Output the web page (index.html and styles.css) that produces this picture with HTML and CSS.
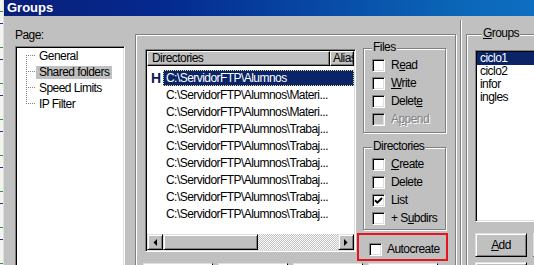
FILE: index.html
```html
<!DOCTYPE html>
<html lang="en">
<head>
  <meta charset="UTF-8" />
  <title>Groups</title>
  <link rel="stylesheet" href="styles.css">
</head>
<body>
  <div class="desk"></div>
  <div class="window">
    <div class="titlebar">Groups</div>
    <div class="content">

      <div class="page-col">
        <div class="page-label">Page:</div>
        <div class="tree sunken">
          <ul class="tree-items">
            <li><span>General</span></li>
            <li class="current"><span>Shared folders</span></li>
            <li><span>Speed Limits</span></li>
            <li><span>IP Filter</span></li>
          </ul>
        </div>
      </div>

      <div class="panel">
        <div class="panel-row">
          <div class="listview sunken">
            <div class="lv-header">
              <div class="lv-col lv-col-dir">Directories</div>
              <div class="lv-col">Alias</div>
            </div>
            <div class="lv-rows">
              <div class="lv-row selected"><span class="home">H</span><span class="path">C:\ServidorFTP\Alumnos</span></div>
              <div class="lv-row"><span class="home"></span><span class="path">C:\ServidorFTP\Alumnos\Materi...</span></div>
              <div class="lv-row"><span class="home"></span><span class="path">C:\ServidorFTP\Alumnos\Materi...</span></div>
              <div class="lv-row"><span class="home"></span><span class="path">C:\ServidorFTP\Alumnos\Trabaj...</span></div>
              <div class="lv-row"><span class="home"></span><span class="path">C:\ServidorFTP\Alumnos\Trabaj...</span></div>
              <div class="lv-row"><span class="home"></span><span class="path">C:\ServidorFTP\Alumnos\Trabaj...</span></div>
              <div class="lv-row"><span class="home"></span><span class="path">C:\ServidorFTP\Alumnos\Trabaj...</span></div>
              <div class="lv-row"><span class="home"></span><span class="path">C:\ServidorFTP\Alumnos\Trabaj...</span></div>
              <div class="lv-row"><span class="home"></span><span class="path">C:\ServidorFTP\Alumnos\Trabaj...</span></div>
            </div>
            <div class="hscroll">
              <div class="sb-btn"><svg width="4" height="7" viewBox="0 0 4 7"><path d="M4 0V7L0.5 3.5Z" fill="#000"/></svg></div>
              <div class="sb-thumb"></div>
              <div class="sb-track"></div>
              <div class="sb-btn"><svg width="4" height="7" viewBox="0 0 4 7"><path d="M0 0V7L3.5 3.5Z" fill="#000"/></svg></div>
            </div>
          </div>

          <div class="perm-col">
            <div class="groupbox files">
              <span class="gb-label">Files</span>
              <div class="checks">
                <div class="check"><span class="box"></span><span>R<u>e</u>ad</span></div>
                <div class="check"><span class="box"></span><span><u>W</u>rite</span></div>
                <div class="check"><span class="box"></span><span>Delet<u>e</u></span></div>
                <div class="check disabled"><span class="box"></span><span>A<u>p</u>pend</span></div>
              </div>
            </div>
            <div class="groupbox dirs">
              <span class="gb-label">Directories</span>
              <div class="checks">
                <div class="check"><span class="box"></span><span><u>C</u>reate</span></div>
                <div class="check"><span class="box"></span><span>Delete</span></div>
                <div class="check"><span class="box"><svg width="9" height="9" viewBox="0 0 9 9"><path d="M1 4.2L3.4 6.6L8 2" fill="none" stroke="#000" stroke-width="2"/></svg></span><span>List</span></div>
                <div class="check"><span class="box"></span><span>+ S<u>u</u>bdirs</span></div>
              </div>
            </div>
            <div class="marked">
              <div class="check"><span class="box"></span><span>Autocreate</span></div>
            </div>
          </div>
        </div>
        <div class="panel-buttons">
          <div class="button"></div>
          <div class="button"></div>
          <div class="button"></div>
          <div class="button"></div>
        </div>
      </div>

      <div class="side">
        <div class="groupbox groups">
          <span class="gb-label"><u>G</u>roups</span>
          <div class="listbox sunken">
            <div class="lb-item selected">ciclo1</div>
            <div class="lb-item">ciclo2</div>
            <div class="lb-item">infor</div>
            <div class="lb-item">ingles</div>
          </div>
          <div class="side-buttons">
            <div class="button add"><span><u>A</u>dd</span></div>
            <div class="button add"></div>
          </div>
          <div class="side-buttons lower">
            <div class="button add"></div>
          </div>
        </div>
      </div>

    </div>
  </div>
</body>
</html>
```

FILE: styles.css
```css
body {
  margin: 0;
  height: 265px;
  overflow: hidden;
  display: flex;
  background: #c0c0c0;
  font-family: "Liberation Sans", Arial, sans-serif;
  font-size: 12px;
  letter-spacing: -0.55px;
  color: #000;
}
u { text-decoration: underline; text-underline-offset: 1px; }

.desk {
  width: 3px;
  flex: none;
  background-color: #f2f2ee;
  background-image: repeating-linear-gradient(to bottom, transparent 0 11px, #2e9a2e 11px 12px, transparent 12px 23px, #2a2a9a 23px 24px, transparent 24px 36px);
}
.window {
  flex: 1;
  border-left: 1px solid #dfdfdf;
  min-width: 0;
}
.titlebar {
  height: 16px;
  line-height: 16px;
  padding-left: 3px;
  color: #fff;
  font-weight: bold;
  font-size: 13px;
  letter-spacing: 0;
  background: linear-gradient(to right, #0a1f78 0%, #04298f 30%, #0b66b8 86%, #0e6ec2 100%);
}
.content {
  display: flex;
  align-items: flex-start;
}

/* sunken 3d edge used by tree, list view and list box */
.sunken {
  box-sizing: border-box;
  background: #fff;
  border: 1px solid;
  border-color: #808080 #fff #fff #808080;
  box-shadow: inset 1px 1px 0 #000, inset -1px -1px 0 #dfdfdf;
  padding: 1px;
}

/* ---- page tree ---- */
.page-col {
  flex: none;
  width: 110px;
  margin-left: 11px;
}
.page-label {
  margin-top: 11px;
  line-height: 16px;
}
.tree {
  margin-top: 3px;
  height: 240px;
}
.tree-items {
  list-style: none;
  margin: 0 0 0 9px;
  padding: 0;
  background-image: repeating-linear-gradient(to bottom, #808080 0 1px, transparent 1px 2px);
  background-repeat: no-repeat;
  background-size: 1px calc(100% - 16px);
  background-position: 0 7px;
}
.tree-items li {
  height: 16px;
  display: flex;
  align-items: center;
  padding-left: 10px;
  white-space: nowrap;
  background-image: repeating-linear-gradient(to right, #808080 0 1px, transparent 1px 2px);
  background-repeat: no-repeat;
  background-size: 9px 1px;
  background-position: 0 7px;
}
.tree-items li span {
  padding: 0 3px;
  line-height: 13px;
}
.tree-items li.current span { background: #c0c0c0; }

/* ---- shared folders panel ---- */
.panel {
  flex: none;
  box-sizing: border-box;
  width: 321px;
  height: 260px;
  margin: 18px 0 0 10px;
  padding: 14px 0 0 9px;
  border: 1px solid #808080;
  box-shadow: inset 1px 1px 0 #fff, 1px 1px 0 #fff;
}
.panel-row {
  display: flex;
  align-items: flex-start;
}
.listview {
  width: 211px;
  height: 203px;
  display: flex;
  flex-direction: column;
  overflow: hidden;
}
.lv-header {
  display: flex;
  height: 15px;
  flex: none;
}
.lv-col {
  box-sizing: border-box;
  line-height: 13px;
  padding-left: 4px;
  background: #c0c0c0;
  border: 1px solid;
  border-color: #fff #000 #000 #fff;
  box-shadow: inset -1px -1px 0 #808080;
  white-space: nowrap;
  overflow: hidden;
}
.lv-col-dir { width: 183px; flex: none; }
.lv-col:last-child { flex: 1; padding-left: 2px; }
.lv-rows {
  flex: 1;
  padding-top: 3px;
}
.lv-row {
  height: 17px;
  display: flex;
  align-items: center;
  padding-left: 4px;
  white-space: nowrap;
}
.home {
  width: 12px;
  flex: none;
  font-weight: bold;
  font-size: 14px;
  letter-spacing: 0;
  color: #0a1a5a;
}
.path {
  flex: 1;
  line-height: 14px;
  padding: 0 2px;
  box-sizing: border-box;
  border: 1px solid transparent;
}
.lv-row.selected .path {
  background: #0a246a;
  color: #fff;
  border: 1px dotted #e8e070;
}
.hscroll {
  display: flex;
  height: 16px;
  flex: none;
}
.sb-btn, .sb-thumb, .button {
  box-sizing: border-box;
  background: #c0c0c0;
  border: 1px solid;
  border-color: #dfdfdf #000 #000 #dfdfdf;
  box-shadow: inset 1px 1px 0 #fff, inset -1px -1px 0 #808080;
}
.sb-btn {
  width: 16px;
  flex: none;
  display: flex;
  align-items: center;
  justify-content: center;
}
.sb-thumb { width: 95px; flex: none; }
.sb-track {
  flex: 1;
  background: repeating-conic-gradient(#c0c0c0 0% 25%, #fff 0% 50%) 0 0 / 2px 2px;
}

.perm-col {
  flex: none;
  width: 91px;
  margin-left: 1px;
}
.groupbox {
  box-sizing: border-box;
  border: 1px solid #808080;
  box-shadow: inset 1px 1px 0 #fff, 1px 1px 0 #fff;
  display: flex;
  flex-direction: column;
  padding-left: 8px;
}
.groupbox > * { flex: none; }
.gb-label {
  align-self: flex-start;
  margin: -9px 0 0 0;
  padding: 0 1px;
  line-height: 14px;
  background: #c0c0c0;
}
.perm-col .groupbox {
  width: 83px;
  margin-left: 6px;
}
.files { margin-top: -1px; height: 85px; }
.dirs { margin-top: 14px; height: 83px; }
.checks { margin-top: 2px; }
.check {
  height: 18px;
  display: flex;
  align-items: center;
  gap: 6px;
  white-space: nowrap;
}
.box {
  box-sizing: border-box;
  width: 13px;
  height: 13px;
  flex: none;
  background: #fff;
  border: 1px solid;
  border-color: #808080 #fff #fff #808080;
  box-shadow: inset 1px 1px 0 #000, inset -1px -1px 0 #dfdfdf;
  display: flex;
  align-items: center;
  justify-content: center;
}
.check.disabled { color: #808080; text-shadow: 1px 1px 0 #fff; }
.check.disabled .box { background: #c0c0c0; }
.marked {
  box-sizing: border-box;
  height: 28px;
  margin-top: 3px;
  padding: 5px 0 0 10px;
  border: 2px solid #e8141c;
}
.marked .check { gap: 5px; }

.panel-buttons {
  display: flex;
  gap: 5px;
  margin: 2px 0 0 -2px;
}
.panel-buttons .button { width: 70px; height: 22px; }

/* ---- groups column ---- */
.side {
  flex: 1;
  height: 250px;
  margin: 4px 0 0 4px;
  padding-left: 5px;
  border-left: 1px solid #808080;
  box-shadow: inset 1px 0 0 #fff;
}
.groups {
  width: 150px;
  height: 260px;
  margin-top: 14px;
}
.groups .gb-label { margin-left: 7px; }
.listbox {
  margin-top: 10px;
  height: 172px;
  width: 130px;
}
.lb-item {
  line-height: 13px;
  padding-left: 3px;
}
.lb-item.selected { background: #0a246a; color: #fff; }
.side-buttons {
  display: flex;
  gap: 6px;
  margin-top: 11px;
}
.side-buttons.lower { margin-top: 5px; }
.button.add {
  width: 52px;
  height: 24px;
  flex: none;
  display: flex;
  align-items: center;
  justify-content: center;
}
```
